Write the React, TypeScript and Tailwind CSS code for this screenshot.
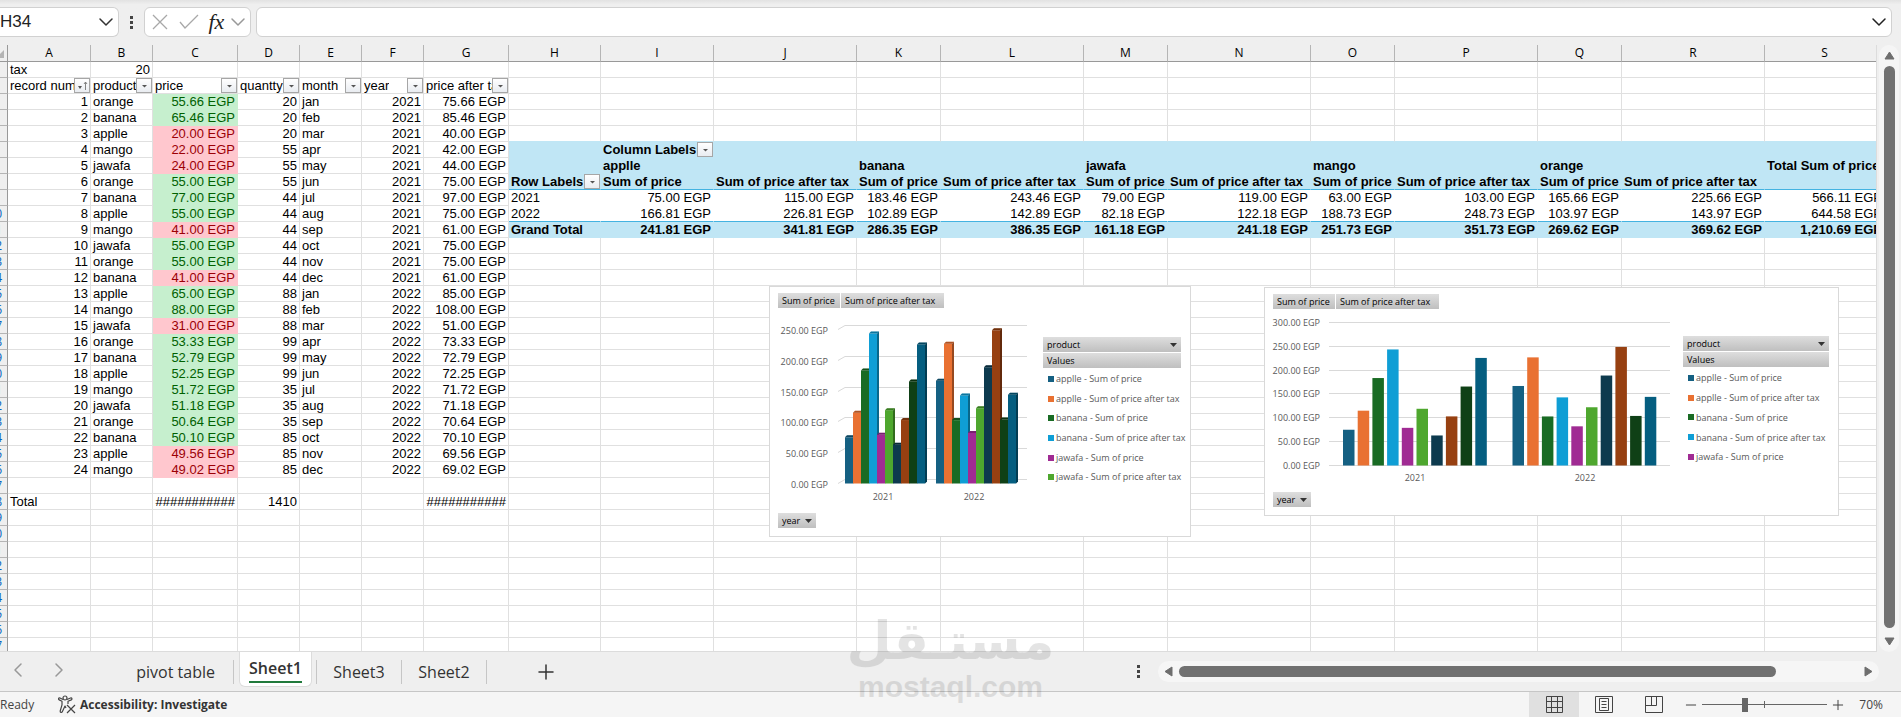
import React, { FC, ReactNode } from "react"
import clsx from "clsx"
import { LuChevronDown, LuChevronLeft, LuChevronRight, LuPlus, LuMinus } from "react-icons/lu"

interface CellData {
  text?: ReactNode
  align?: "left" | "right"
  bold?: boolean
  className?: string
  filter?: "sort" | "plain"
}

interface Series {
  label: string
  color: string
}

const columns = [
  { name: "A", width: "w-[83px]" },
  { name: "B", width: "w-[62px]" },
  { name: "C", width: "w-[85px]" },
  { name: "D", width: "w-[62px]" },
  { name: "E", width: "w-[62px]" },
  { name: "F", width: "w-[62px]" },
  { name: "G", width: "w-[85px]" },
  { name: "H", width: "w-[92px]" },
  { name: "I", width: "w-[113px]" },
  { name: "J", width: "w-[143px]" },
  { name: "K", width: "w-[84px]" },
  { name: "L", width: "w-[143px]" },
  { name: "M", width: "w-[84px]" },
  { name: "N", width: "w-[143px]" },
  { name: "O", width: "w-[84px]" },
  { name: "P", width: "w-[143px]" },
  { name: "Q", width: "w-[84px]" },
  { name: "R", width: "w-[143px]" },
  { name: "S", width: "w-[120px]" },
]

// product, price, quantity, month, year
const records: [string, number, number, string, number][] = [
  ["orange", 55.66, 20, "jan", 2021],
  ["banana", 65.46, 20, "feb", 2021],
  ["applle", 20, 20, "mar", 2021],
  ["mango", 22, 55, "apr", 2021],
  ["jawafa", 24, 55, "may", 2021],
  ["orange", 55, 55, "jun", 2021],
  ["banana", 77, 44, "jul", 2021],
  ["applle", 55, 44, "aug", 2021],
  ["mango", 41, 44, "sep", 2021],
  ["jawafa", 55, 44, "oct", 2021],
  ["orange", 55, 44, "nov", 2021],
  ["banana", 41, 44, "dec", 2021],
  ["applle", 65, 88, "jan", 2022],
  ["mango", 88, 88, "feb", 2022],
  ["jawafa", 31, 88, "mar", 2022],
  ["orange", 53.33, 99, "apr", 2022],
  ["banana", 52.79, 99, "may", 2022],
  ["applle", 52.25, 99, "jun", 2022],
  ["mango", 51.72, 35, "jul", 2022],
  ["jawafa", 51.18, 35, "aug", 2022],
  ["orange", 50.64, 35, "sep", 2022],
  ["banana", 50.1, 85, "oct", 2022],
  ["applle", 49.56, 85, "nov", 2022],
  ["mango", 49.02, 85, "dec", 2022],
]

const tax = 20

const sums2021 = [75, 115, 183.46, 243.46, 79, 119, 63, 103, 165.66, 225.66]
const sums2022 = [166.81, 226.81, 102.89, 142.89, 82.18, 122.18, 188.73, 248.73, 103.97, 143.97]
const grandTotals = [241.81, 341.81, 286.35, 386.35, 161.18, 241.18, 251.73, 351.73, 269.62, 369.62]

const barColors = [
  "#156082",
  "#e97132",
  "#196b24",
  "#0f9ed5",
  "#a02b93",
  "#4ea72e",
  "#0d3a4e",
  "#974011",
  "#0f4016",
  "#055e80",
]

const series: Series[] = [
  { label: "applle - Sum of price", color: "bg-[#156082]" },
  { label: "applle - Sum of price after tax", color: "bg-[#e97132]" },
  { label: "banana - Sum of price", color: "bg-[#196b24]" },
  { label: "banana - Sum of price after tax", color: "bg-[#0f9ed5]" },
  { label: "jawafa - Sum of price", color: "bg-[#a02b93]" },
  { label: "jawafa - Sum of price after tax", color: "bg-[#4ea72e]" },
]

const egp = (value: number) =>
  `${value.toLocaleString("en-US", { minimumFractionDigits: 2, maximumFractionDigits: 2 })} EGP`

const sheetTitles: CellData[] = [
  { text: "record num", filter: "sort" },
  { text: "product", filter: "plain" },
  { text: "price", filter: "plain" },
  { text: "quantty", filter: "plain" },
  { text: "month", filter: "plain" },
  { text: "year", filter: "plain" },
  { text: "price after tax", filter: "plain" },
]

function recordCell(row: number, col: number): CellData {
  if (row === 1) {
    if (col === 0) return { text: "tax" }
    if (col === 1) return { text: tax, align: "right" }
  }
  if (row === 2) return sheetTitles[col]
  if (row === 28) {
    if (col === 0) return { text: "Total" }
    if (col === 3) return { text: "1410", align: "right" }
    if (col === 2 || col === 6) return { text: "###########", align: "right" }
  }

  const record = records[row - 3]
  if (!record) return {}
  const [product, price, quantity, month, year] = record
  const cells: CellData[] = [
    { text: row - 2, align: "right" },
    { text: product },
    {
      text: egp(price),
      align: "right",
      className:
        price > 50
          ? "bg-[#c6efce] border-[#c6efce] text-[#006100]"
          : "bg-[#ffc7ce] border-[#ffc7ce] text-[#9c0006]",
    },
    { text: quantity, align: "right" },
    { text: month },
    { text: year, align: "right" },
    { text: egp(price + tax), align: "right" },
  ]
  return cells[col]
}

const pivotHead = "bg-[#c0e6f5] border-[#c0e6f5]"
const pivotHeadLine = "bg-[#c0e6f5] border-r-[#c0e6f5] border-b-[#44b3e1]"
const products = ["applle", "banana", "jawafa", "mango", "orange"]

// The pivot table covers H6:S11
function pivotCell(row: number, col: number): CellData {
  const index = col - 8
  const last = col === 18

  if (row === 6) {
    return col === 8
      ? { text: "Column Labels", bold: true, filter: "plain", className: pivotHead }
      : { className: pivotHead }
  }
  if (row === 7) {
    const title = last ? "Total Sum of price" : index >= 0 && index % 2 === 0 ? products[index / 2] : ""
    return { text: title, bold: true, className: pivotHead }
  }
  if (row === 8) {
    if (col === 7) return { text: "Row Labels", bold: true, filter: "plain", className: pivotHeadLine }
    if (last) return { className: pivotHeadLine }
    return {
      text: index % 2 === 0 ? "Sum of price" : "Sum of price after tax",
      bold: true,
      className: pivotHeadLine,
    }
  }
  if (row === 9) {
    if (col === 7) return { text: "2021", className: "border-white" }
    return { text: egp(last ? 566.11 : sums2021[index]), align: "right", className: "border-white" }
  }
  if (row === 10) {
    const line = "border-r-white border-b-[#44b3e1]"
    if (col === 7) return { text: "2022", className: line }
    return { text: egp(last ? 644.58 : sums2022[index]), align: "right", className: line }
  }
  if (col === 7) return { text: "Grand Total", bold: true, className: pivotHead }
  return {
    text: egp(last ? 1210.69 : grandTotals[index]),
    align: "right",
    bold: true,
    className: pivotHead,
  }
}

function getCell(row: number, col: number): CellData {
  if (col < 7) return recordCell(row, col)
  if (row >= 6 && row <= 11) return pivotCell(row, col)
  // the header fill of the pivot hides the gridline above it
  if (row === 5) return { className: "border-r-[#e0e0e0] border-b-[#c0e6f5]" }
  return {}
}

const FilterButton: FC<{ sorted?: boolean }> = ({ sorted }) => (
  <button
    aria-label="Filter"
    className="flex h-[15px] w-4 shrink-0 items-center justify-center border border-[#a6a6a6] bg-linear-to-b from-white to-[#e9ecf1]"
  >
    <svg viewBox="0 0 13 13" className="size-[13px]">
      {sorted ? (
        <>
          <path d="M2 7h4L4 10z" fill="#555" />
          <path d="M9.500 11V3.500M8 5l1.500-2L11 5" fill="none" stroke="#666" strokeWidth=".8" />
        </>
      ) : (
        <path d="M4 6h5L6.500 8.500z" fill="#555" />
      )}
    </svg>
  </button>
)

const Cell: FC<{ data: CellData }> = ({ data }) => {
  const { text, align, bold, className, filter } = data

  return (
    <td
      className={clsx(
        "h-4 overflow-hidden border-r border-b p-0 leading-[15px] whitespace-nowrap",
        !filter && "px-[2px]",
        align === "right" && "text-right",
        bold && "font-bold",
        className || "border-[#e0e0e0]"
      )}
    >
      {filter ? (
        <div className="flex h-[15px] items-center justify-between pl-[2px]">
          <span className="min-w-0 overflow-hidden">{text}</span>
          <FilterButton sorted={filter === "sort"} />
        </div>
      ) : (
        text
      )}
    </td>
  )
}

const Sheet = () => (
  <table className="w-[1885px] table-fixed border-separate border-spacing-0 bg-white font-['Liberation_Sans',sans-serif] text-[13px] text-black">
    <colgroup>
      <col className="w-2" />
      {columns.map(({ name, width }) => (
        <col key={name} className={width} />
      ))}
    </colgroup>
    <thead>
      <tr>
        <th className="h-[17px] border-r border-b border-[#999] bg-[#efefef] p-0">
          <svg viewBox="0 0 7 16" className="h-4 w-[7px]">
            <path d="M4 5v8H0V9z" fill="#b4b4b4" />
          </svg>
        </th>
        {columns.map(({ name }) => (
          <th
            key={name}
            scope="col"
            className="h-[17px] border-r border-b border-r-[#b5b5b5] border-b-[#999] bg-[#efefef] p-0 font-['Open_Sans',sans-serif] text-xs leading-4 font-normal"
          >
            {name}
          </th>
        ))}
      </tr>
    </thead>
    <tbody>
      {Array.from({ length: 37 }, (_, i) => i + 1).map((row) => (
        <tr key={row}>
          <th
            scope="row"
            className="h-4 border-r border-b border-r-[#999] border-b-[#b5b5b5] bg-[#efefef] p-0 font-['Open_Sans',sans-serif] text-xs leading-[15px] font-normal text-[#0563c1]"
          >
            <div className="flex justify-end pr-[5px]">{row > 9 && row}</div>
          </th>
          {columns.map(({ name }, col) => (
            <Cell key={name} data={getCell(row, col)} />
          ))}
        </tr>
      ))}
    </tbody>
  </table>
)

const FieldButton: FC<{ children: ReactNode; arrow?: boolean; className?: string }> = ({
  children,
  arrow,
  className,
}) => (
  <button
    className={clsx(
      "flex h-[15px] items-center justify-between bg-linear-to-b from-[#dedede] to-[#bfbfbf] px-1 text-left text-[9px] text-black",
      className
    )}
  >
    {children}
    {arrow && (
      <svg viewBox="0 0 7 4" className="h-1 w-[7px]">
        <path d="M0 0h7L3.500 4z" fill="#333" />
      </svg>
    )}
  </button>
)

const Legend: FC<{ items: Series[]; className: string; listClass: string }> = ({
  items,
  className,
  listClass,
}) => (
  <div className={clsx("flex flex-col gap-px", className)}>
    <FieldButton arrow>product</FieldButton>
    <FieldButton>Values</FieldButton>
    <ul className={clsx("flex flex-col pl-[5px] text-[9px] text-[#595959]", listClass)}>
      {items.map(({ label, color }) => (
        <li key={label} className="flex flex-1 items-center gap-[2px] whitespace-nowrap">
          <span className={clsx("size-[6px] shrink-0", color)} />
          {label}
        </li>
      ))}
    </ul>
  </div>
)

const ChartFrame: FC<{ children: ReactNode; className: string }> = ({ children, className }) => (
  <section
    className={clsx(
      "absolute flex flex-col border border-[#d9d9d9] bg-white pt-[6px] pl-2 font-['Open_Sans',sans-serif]",
      className
    )}
  >
    <div className="flex gap-px">
      <FieldButton className="w-[62px]">Sum of price</FieldButton>
      <FieldButton className="w-[103px]">Sum of price after tax</FieldButton>
    </div>
    {children}
    <FieldButton arrow className="w-[38px]">
      year
    </FieldButton>
  </section>
)

const groups = [sums2021, sums2022]

const PerspectiveChart = () => {
  const unit = 0.616
  const base = 167.5

  return (
    <ChartFrame className="top-[241px] left-[769px] h-[251px] w-[422px]">
      <div className="mt-2 mb-[7px] flex gap-[7px]">
        <svg viewBox="0 0 258 190" className="h-[190px] w-[258px] text-[9px]">
          {[0, 50, 100, 150, 200, 250].map((tick) => {
            const y = Math.floor(base - tick * unit) + 0.5
            return (
              <g key={tick}>
                <path d={`M60 ${y}L67 ${y - 4}H249`} fill="none" stroke="#d9d9d9" />
                <text x="50" y={y + 4} textAnchor="end" fill="#595959">
                  {egp(tick)}
                </text>
              </g>
            )
          })}
          {groups.map((values, group) =>
            values.map((value, i) => {
              const x = 67 + group * 91 + i * 8
              const y = base - value * unit
              return (
                <g key={`${group}-${i}`} fill={barColors[i]}>
                  <rect x={x} y={y} width="8" height={base - y} />
                  <path d={`M${x} ${y}l2-2h8l-2 2z`} />
                  <path d={`M${x + 8} ${y}l2-2V${base - 2}l-2 2z`} />
                  <path d={`M${x} ${y}l2-2h8l-2 2z`} fill="#000" opacity=".25" />
                  <path d={`M${x + 8} ${y}l2-2V${base - 2}l-2 2z`} fill="#000" opacity=".35" />
                </g>
              )
            })
          )}
          <g textAnchor="middle" fill="#595959">
            <text x="105" y="184">
              2021
            </text>
            <text x="196" y="184">
              2022
            </text>
          </g>
        </svg>
        <Legend items={series} className="mt-[21px] w-[138px]" listClass="h-[118px]" />
      </div>
    </ChartFrame>
  )
}

const ColumnChart = () => {
  const unit = 0.4767
  const base = 149.5

  return (
    <ChartFrame className="top-[242px] left-[1264px] h-[229px] w-[575px]">
      <div className="mt-[7px] mb-[6px] flex gap-[10px]">
        <svg viewBox="0 0 400 170" className="h-[170px] w-[400px] overflow-visible text-[9px]">
          {[0, 50, 100, 150, 200, 250, 300].map((tick) => {
            const y = Math.floor(base - tick * unit) + 0.5
            return (
              <g key={tick}>
                <path d={`M56 ${y}H397`} stroke="#d9d9d9" />
                <text x="47" y={y + 3} textAnchor="end" fill="#595959">
                  {egp(tick)}
                </text>
              </g>
            )
          })}
          {groups.map((values, group) =>
            values.map((value, i) => (
              <rect
                key={`${group}-${i}`}
                x={70 + group * 169.5 + i * 14.7}
                y={base - value * unit}
                width="11.5"
                height={value * unit}
                fill={barColors[i]}
              />
            ))
          )}
          <g textAnchor="middle" fill="#595959">
            <text x="142" y="165">
              2021
            </text>
            <text x="312" y="165">
              2022
            </text>
          </g>
        </svg>
        <Legend items={series.slice(0, 5)} className="mt-[20px] w-[146px]" listClass="h-[99px]" />
      </div>
    </ChartFrame>
  )
}

const FormulaBar = () => (
  <header className="flex h-[45px] shrink-0 bg-linear-to-b from-[#e2e2e2] to-[#efefef] to-10% pt-[7px] pr-[9px]">
    <div className="flex h-[30px] w-[119px] items-center justify-between rounded-r-md border border-l-0 border-[#d1d1d1] bg-white">
      <input
        aria-label="Name box"
        defaultValue="H34"
        className="w-20 bg-transparent font-['Liberation_Sans',sans-serif] text-[17px] text-[#222] outline-none"
      />
      <LuChevronDown strokeWidth={1.5} className="size-6 text-[#333]" />
    </div>
    <div className="flex h-[30px] w-[25px] flex-col items-center justify-center gap-[2px]">
      <span className="size-[3px] bg-[#444]" />
      <span className="size-[3px] bg-[#444]" />
      <span className="size-[3px] bg-[#444]" />
    </div>
    <div className="flex h-[30px] w-[107px] items-center rounded-md border border-[#d1d1d1] bg-white pl-[7px]">
      <button aria-label="Cancel" className="w-[28px]">
        <svg viewBox="0 0 16 16" className="size-4">
          <path d="M1 1l14 14M15 1L1 15" stroke="#a8a8a8" strokeWidth="1.300" />
        </svg>
      </button>
      <button aria-label="Enter" className="w-[30px]">
        <svg viewBox="0 0 20 16" className="h-4 w-5">
          <path d="M1 8l5 6L19 1" fill="none" stroke="#a8a8a8" strokeWidth="1.300" />
        </svg>
      </button>
      <button
        aria-label="Insert function"
        className="w-[18px] text-left font-['Liberation_Serif',serif] text-[22px] leading-6 text-[#222] italic"
      >
        fx
      </button>
      <LuChevronDown strokeWidth={1.5} className="size-6 shrink-0 text-[#999]" />
    </div>
    <div className="ml-[5px] flex h-[30px] flex-1 items-center rounded-md border border-[#d1d1d1] bg-white">
      <input aria-label="Formula" className="h-full flex-1 bg-transparent px-2 outline-none" />
      <LuChevronDown strokeWidth={1.5} className="size-6 text-[#222]" />
    </div>
  </header>
)

const VerticalScroll = () => (
  <div className="mr-[2px] ml-[2px] flex w-5 shrink-0 flex-col items-center gap-[6px] rounded-[10px] bg-[#f5f5f5] py-[6px]">
    <svg viewBox="0 0 11 9" className="h-[9px] w-[11px]">
      <path d="M5.500 1L10 8H1z" fill="#6e6e6e" stroke="#6e6e6e" strokeLinejoin="round" />
    </svg>
    <div className="mb-[3px] w-[11px] flex-1 rounded-full bg-[#717171]" />
    <svg viewBox="0 0 11 9" className="h-[9px] w-[11px]">
      <path d="M5.500 8L10 1H1z" fill="#6e6e6e" stroke="#6e6e6e" strokeLinejoin="round" />
    </svg>
  </div>
)

const Tabs = () => (
  <nav className="flex h-10 shrink-0 items-start border-b border-[#c6c6c6] bg-[#efefef] font-['Open_Sans',sans-serif] text-base text-[#333]">
    <div className="flex h-9 w-[120px] items-center gap-[17px] pl-[6px] text-[#999]">
      <button aria-label="Previous sheet">
        <LuChevronLeft strokeWidth={1.5} className="size-6" />
      </button>
      <button aria-label="Next sheet">
        <LuChevronRight strokeWidth={1.5} className="size-6" />
      </button>
    </div>
    <div className="flex h-[39px] items-center">
      <a href="#pivot" className="mr-[5px] w-[114px] border-r border-[#c6c6c6] pr-[18px] text-right leading-6">
        pivot table
      </a>
      <a
        href="#sheet1"
        className="flex h-[35px] w-[73px] justify-center self-start rounded-b-md border border-t-0 border-[#dcdcdc] bg-white font-semibold"
      >
        <span className="h-[31px] border-b-2 border-[#217a3c] leading-[32px]">Sheet1</span>
      </a>
      <a href="#sheet3" className="ml-1 w-[86px] border-x border-[#c6c6c6] text-center leading-6">
        Sheet3
      </a>
      <a href="#sheet2" className="w-[85px] border-r border-[#c6c6c6] text-center leading-6">
        Sheet2
      </a>
      <button aria-label="New sheet" className="ml-[47px]">
        <LuPlus strokeWidth={1.5} className="size-6" />
      </button>
    </div>
    <div className="ml-auto flex h-[38px] w-[764px] items-center pr-[22px]">
      <div className="mr-[18px] flex flex-col gap-[2px]">
        <span className="size-[3px] bg-[#444]" />
        <span className="size-[3px] bg-[#444]" />
        <span className="size-[3px] bg-[#444]" />
      </div>
      <div className="flex h-[21px] flex-1 items-center rounded-full bg-[#f6f6f6] px-[6px]">
        <svg viewBox="0 0 9 11" className="h-[11px] w-[9px]">
          <path d="M1 5.500L8 1v9z" fill="#6e6e6e" stroke="#6e6e6e" strokeLinejoin="round" />
        </svg>
        <div className="mr-[88px] ml-[6px] h-[11px] flex-1 rounded-full bg-[#717171]" />
        <svg viewBox="0 0 9 11" className="h-[11px] w-[9px]">
          <path d="M8 5.500L1 1v9z" fill="#6e6e6e" stroke="#6e6e6e" strokeLinejoin="round" />
        </svg>
      </div>
    </div>
  </nav>
)

const StatusBar = () => (
  <footer className="flex h-[25px] shrink-0 items-center bg-[#f5f5f5] font-['Open_Sans',sans-serif] text-xs text-[#444]">
    <span className="w-[57px]">Ready</span>
    <button className="flex items-center gap-1 font-bold text-[#333]">
      <svg viewBox="0 0 19 19" className="size-[19px]" fill="none" stroke="#444" strokeWidth="1.200">
        <circle cx="8" cy="3" r="2" />
        <path
          d="M6 4.500L3 3c-1.500-.5-2 1.300-.8 1.900L5 6.300v3.500L3.200 16c-.3 1.500 1.500 2 2.100.7L8 11l1 2M10 4.500L13.500 3c1.500-.5 2 1.300.8 1.900L11 6.300V9"
          strokeLinejoin="round"
        />
        <path d="M10 10l8 8M18 10l-8 8" />
      </svg>
      Accessibility: Investigate
    </button>
    <div className="ml-auto flex h-full items-center pr-[18px]">
      <button aria-label="Normal" className="flex h-full w-[50px] items-center justify-center bg-[#e0e0e0]">
        <svg viewBox="0 0 17 17" className="size-[17px]" fill="none" stroke="#444">
          <path d="M.5.5h16v16H.5zM.5 5.500h16M.5 11.500h16M5.500.5v16M11.500.5v16" />
        </svg>
      </button>
      <button aria-label="Page layout" className="flex h-full w-[50px] items-center justify-center">
        <svg viewBox="0 0 18 17" className="h-[17px] w-[18px]" fill="none" stroke="#444">
          <path d="M.5.5h17v16H.5zM4.500 2.500h9v12h-9zM6.500 5.500h5M6.500 8.500h5M6.500 11.500h5" />
        </svg>
      </button>
      <button aria-label="Page break preview" className="flex h-full w-[50px] items-center justify-center">
        <svg viewBox="0 0 18 17" className="h-[17px] w-[18px]" fill="none" stroke="#444">
          <path d="M.5.5h17v16H.5zM.5 9.500h11V.5M6.500.5v9" />
        </svg>
      </button>
      <button aria-label="Zoom out" className="ml-1">
        <LuMinus strokeWidth={1.5} className="size-4" />
      </button>
      <input
        type="range"
        aria-label="Zoom"
        min="10"
        max="190"
        defaultValue="70"
        className="mx-[3px] h-[15px] w-[125px] appearance-none bg-[linear-gradient(#666,#666),linear-gradient(#666,#666)] bg-[length:100%_1px,1px_7px] bg-center bg-no-repeat [&::-webkit-slider-thumb]:h-[14px] [&::-webkit-slider-thumb]:w-[6px] [&::-webkit-slider-thumb]:appearance-none [&::-webkit-slider-thumb]:bg-[#666]"
      />
      <button aria-label="Zoom in">
        <LuPlus strokeWidth={1.5} className="size-4" />
      </button>
      <span className="ml-[13px]">70%</span>
    </div>
  </footer>
)

const Watermark = () => (
  <div className="pointer-events-none absolute bottom-[14px] left-1/2 flex -translate-x-1/2 flex-col items-center font-bold text-black opacity-10">
    <span dir="rtl" lang="ar" className="font-['DejaVu_Sans',sans-serif] text-[52px] leading-[60px] whitespace-nowrap">
      مستـقل
    </span>
    <span className="font-['Liberation_Sans',sans-serif] text-[30px] leading-8">mostaql.com</span>
  </div>
)

const App = () => {
  return (
    <div className="relative flex h-screen flex-col overflow-hidden bg-[#efefef]">
      <FormulaBar />
      <main className="flex min-h-0 flex-1">
        <div className="relative min-w-0 flex-1 overflow-hidden border-r border-b border-[#dcdcdc]">
          <Sheet />
          <PerspectiveChart />
          <ColumnChart />
        </div>
        <VerticalScroll />
      </main>
      <Tabs />
      <StatusBar />
      <Watermark />
    </div>
  )
}

export default App
